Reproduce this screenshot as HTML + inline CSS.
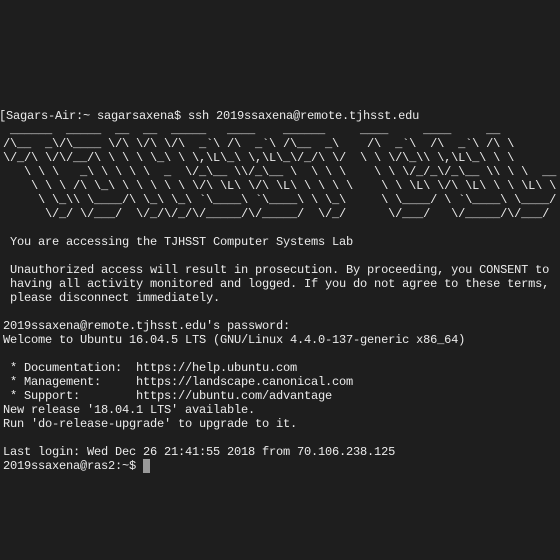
<!DOCTYPE html>
<html><head><meta charset="utf-8"><style>
html,body{margin:0;padding:0;background:#1e1e1e;width:560px;height:560px;overflow:hidden}
pre{position:absolute;left:3px;top:109px;margin:0;font-family:"Liberation Mono",monospace;font-size:12px;letter-spacing:-0.2px;line-height:14px;color:#ececec}
.c{display:inline-block;width:7px;height:14px;background:#9a9a9a;vertical-align:top}
.f{margin-left:-4px}
</style></head><body>
<pre><span class="f">[Sagars-Air:~ sagarsaxena$ ssh 2019ssaxena@remote.tjhsst.edu</span>
 ______  _____  __  __  _____   ____    ______     ____     ____     __
/\__  _\/\____ \/\ \/\ \/\  _`\ /\  _`\ /\__  _\    /\  _`\  /\  _`\ /\ \
\/_/\ \/\/__/\ \ \ \ \_\ \ \,\L\_\ \,\L\_\/_/\ \/  \ \ \/\_\\ \,\L\_\ \ \
   \ \ \   _\ \ \ \ \  _  \/_\__ \\/_\__ \  \ \ \    \ \ \/_/_\/_\__ \\ \ \  __
    \ \ \ /\ \_\ \ \ \ \ \ \/\ \L\ \/\ \L\ \ \ \ \    \ \ \L\ \/\ \L\ \ \ \L\ \
     \ \_\\ \____/\ \_\ \_\ `\____\ `\____\ \ \_\     \ \____/ \ `\____\ \____/
      \/_/ \/___/  \/_/\/_/\/_____/\/_____/  \/_/      \/___/   \/_____/\/___/

 You are accessing the TJHSST Computer Systems Lab

 Unauthorized access will result in prosecution. By proceeding, you CONSENT to
 having all activity monitored and logged. If you do not agree to these terms,
 please disconnect immediately.

2019ssaxena@remote.tjhsst.edu's password:
Welcome to Ubuntu 16.04.5 LTS (GNU/Linux 4.4.0-137-generic x86_64)

 * Documentation:  https://help.ubuntu.com
 * Management:     https://landscape.canonical.com
 * Support:        https://ubuntu.com/advantage
New release '18.04.1 LTS' available.
Run 'do-release-upgrade' to upgrade to it.

Last login: Wed Dec 26 21:41:55 2018 from 70.106.238.125
2019ssaxena@ras2:~$ <span class="c"></span></pre>
</body></html>
